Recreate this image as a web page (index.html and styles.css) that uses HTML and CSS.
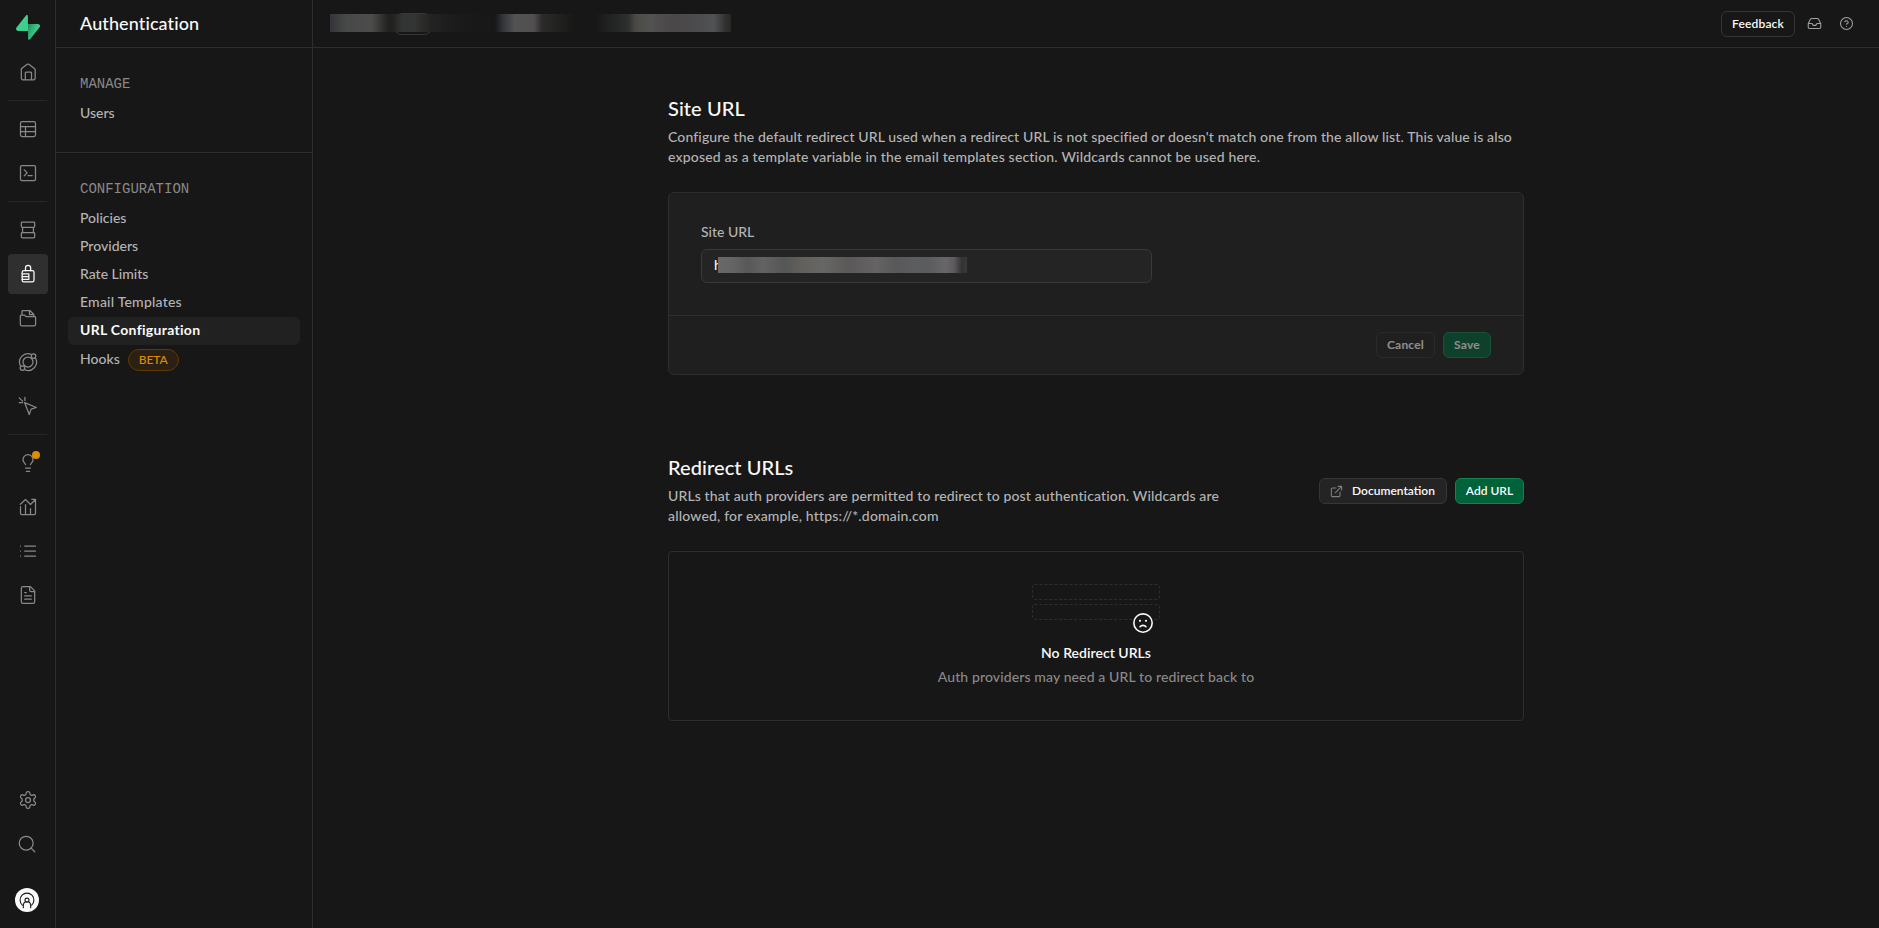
FILE: index.html
```
<!DOCTYPE html>
<html lang="en">
<head>
<meta charset="utf-8">
<title>Authentication</title>
<link rel="stylesheet" href="styles.css">
</head>
<body>
<div class="app">
  <nav class="rail">
    <a class="logo"><svg viewBox="0 0 109 113"><defs><linearGradient id="bolt" x1="54" y1="55" x2="94" y2="72" gradientUnits="userSpaceOnUse"><stop stop-color="#249361"/><stop offset="1" stop-color="#3ecf8e"/></linearGradient></defs><path fill="url(#bolt)" d="M63.7 110.3C60.8 113.9 55 111.9 55 107.3L54 40.1H99.2C107.4 40.1 112 49.5 106.9 55.9Z"/><path fill="#3ecf8e" d="M45.3 2.1C48.2-1.5 54 .4 54 5L54.5 72.3H9.8C1.6 72.3-2.9 62.8 2.2 56.4Z"/></svg></a>
    <a class="rail-item"><svg viewBox="0 0 24 24"><path d="M4 8l7-5.2a1.8 1.8 0 0 1 2 0L20 8a1.5 1.5 0 0 1 .6 1.2v10.3a1.8 1.8 0 0 1-1.8 1.8H5.8A1.8 1.8 0 0 1 4 19.500Z M8.800 21.200v-8a1.200 1.200 0 0 1 1.200-1.200h5a1.200 1.200 0 0 1 1.200 1.200v8"/></svg></a>
    <hr class="rail-line">
    <a class="rail-item"><svg viewBox="0 0 24 24"><rect x="3" y="3" width="18" height="18" rx="2"/><path d="M3 9h18M3 15h18M9 9v12"/></svg></a>
    <a class="rail-item"><svg viewBox="0 0 24 24"><rect x="3" y="3" width="18" height="18" rx="1.500"/><path d="M7.500 8.300L11 11.800l-3.500 3.500M12 15h5"/></svg></a>
    <hr class="rail-line">
    <a class="rail-item"><svg viewBox="0 0 24 24"><rect x="4" y="2.600" width="16" height="6.200" rx="1"/><path d="M5.500 8.800v6.400M18.500 8.800v6.400"/><rect x="4" y="15.200" width="16" height="6.200" rx="1"/></svg></a>
    <a class="rail-item active"><svg viewBox="0 0 24 24"><path d="M9 8V4.800a3.100 3.100 0 0 1 6.200 0V8M5 11.800h8v6.700H5M5 15.200h8"/><rect x="5" y="8" width="14.200" height="13.500" rx="2"/></svg></a>
    <a class="rail-item"><svg viewBox="0 0 24 24"><path d="M4.800 8.500V4a1 1 0 0 1 1-1h8.400L19 7.800v2.600M13.800 3v4.800H19M2.800 9.500a1 1 0 0 1 1-1h3.700l2.600 1.900h10a1 1 0 0 1 1 1v8.100a2 2 0 0 1-2 2H4.800a2 2 0 0 1-2-2Z"/></svg></a>
    <a class="rail-item"><svg viewBox="0 0 24 24"><path d="M16 2.900A10 10 0 0 0 3.200 17M20.900 7.200A10 10 0 0 1 8 21.200"/><circle cx="12" cy="12" r="6"/><circle cx="18.600" cy="4.900" r="2.700"/><circle cx="5.300" cy="19.200" r="2.700"/></svg></a>
    <a class="rail-item"><svg viewBox="0 0 24 24"><path d="M8 8l14 5.800-6.300 2-2.200 6.400ZM1.500 2.200l4 4M8.300 1.500v4M1.500 8h4"/></svg></a>
    <hr class="rail-line">
    <a class="rail-item"><svg viewBox="0 0 24 24"><path d="M15 14c.2-1 .7-1.700 1.500-2.500 1-.9 1.500-2.200 1.500-3.500A6 6 0 0 0 6 8c0 1 .2 2.200 1.500 3.500.7.700 1.300 1.500 1.500 2.500M9 18h6M10 22h4"/></svg><i class="dot"></i></a>
    <a class="rail-item"><svg viewBox="0 0 24 24"><path d="M3 11.500v8a1.500 1.500 0 0 0 1.500 1.500h15a1.500 1.500 0 0 0 1.500-1.500V8M2.800 8.700L9 3l6 6 6-6M16.500 2.800H21v4M9 9v12M15 14v7"/></svg></a>
    <a class="rail-item"><svg viewBox="0 0 24 24"><path d="M8 6h13M8 12h13M8 18h13M3 6h.01M3 12h.01M3 18h.01"/></svg></a>
    <a class="rail-item"><svg viewBox="0 0 24 24"><path d="M15 2H6a2 2 0 0 0-2 2v16a2 2 0 0 0 2 2h12a2 2 0 0 0 2-2V7Z M14 2v4a2 2 0 0 0 2 2h4M10 9H8M16 13H8M16 17H8"/></svg></a>
    <div class="rail-bottom">
      <a class="rail-item"><svg viewBox="0 0 24 24"><path d="M12.220 2h-.44a2 2 0 0 0-2 2v.18a2 2 0 0 1-1 1.730l-.43.250a2 2 0 0 1-2 0l-.15-.080a2 2 0 0 0-2.730.730l-.22.380a2 2 0 0 0 .730 2.730l.150.100a2 2 0 0 1 1 1.720v.510a2 2 0 0 1-1 1.740l-.15.090a2 2 0 0 0-.73 2.730l.220.380a2 2 0 0 0 2.730.730l.150-.080a2 2 0 0 1 2 0l.430.250a2 2 0 0 1 1 1.730V20a2 2 0 0 0 2 2h.440a2 2 0 0 0 2-2v-.180a2 2 0 0 1 1-1.730l.430-.250a2 2 0 0 1 2 0l.150.080a2 2 0 0 0 2.730-.730l.220-.390a2 2 0 0 0-.730-2.730l-.150-.080a2 2 0 0 1-1-1.740v-.500a2 2 0 0 1 1-1.740l.150-.090a2 2 0 0 0 .730-2.730l-.220-.380a2 2 0 0 0-2.730-.730l-.150.080a2 2 0 0 1-2 0l-.430-.250a2 2 0 0 1-1-1.730V4a2 2 0 0 0-2-2z"/><circle cx="12" cy="12" r="3"/></svg></a>
      <a class="rail-item search"><svg viewBox="0 0 24 24"><circle cx="11" cy="11" r="8.300"/><path d="M21.300 21.300l-4.400-4.400"/></svg></a>
      <a class="avatar"><svg viewBox="0 0 24 24"><path d="M7.300 17.100a6.900 6.900 0 1 1 9.400 0"/><circle cx="12" cy="12.100" r="2"/><path d="M8.300 19.800v-2.300c0-1.800 1.200-3.300 2.600-3.900M15.700 19.800v-2.300c0-1.800-1.200-3.300-2.600-3.900"/></svg></a>
    </div>
  </nav>

  <aside class="side">
    <h1 class="side-title">Authentication</h1>
    <section class="side-group manage">
      <h2>MANAGE</h2>
      <a>Users</a>
    </section>
    <section class="side-group">
      <h2>CONFIGURATION</h2>
      <a>Policies</a>
      <a>Providers</a>
      <a>Rate Limits</a>
      <a class="wide">Email Templates</a>
      <a class="current">URL Configuration</a>
      <a class="hooks">Hooks <span class="beta">BETA</span></a>
    </section>
  </aside>

  <div class="main">
    <header class="top">
      <div class="crumbs"><i class="crumb-pill"></i><i class="crumb-blur"></i></div>
      <div class="top-actions">
        <button class="btn outline">Feedback</button>
        <svg class="ico" viewBox="0 0 24 24"><path d="M22 12h-6l-2 3h-4l-2-3H2M5.450 5.110L2 12v6a2 2 0 0 0 2 2h16a2 2 0 0 0 2-2v-6l-3.450-6.890A2 2 0 0 0 16.760 4H7.240a2 2 0 0 0-1.790 1.110z"/></svg>
        <svg class="ico" viewBox="0 0 24 24"><circle cx="12" cy="12" r="9.600"/><path d="M9.300 9.300a2.800 2.800 0 0 1 5.400 1c0 1.800-2.700 2.700-2.700 2.700M12 16.700h.01"/></svg>
      </div>
    </header>

    <main class="content">
      <section>
        <h3>Site URL</h3>
        <p class="desc">Configure the default redirect URL used when a redirect URL is not specified or doesn't match one from the allow list. This value is also<br><span class="loose">exposed as a template variable in the email templates section. Wildcards cannot be used here.</span></p>
        <div class="card">
          <div class="card-body">
            <label>Site URL</label>
            <div class="input"><span>h</span><i class="value-blur"></i></div>
          </div>
          <div class="card-foot">
            <button class="btn outline off">Cancel</button>
            <button class="btn primary off">Save</button>
          </div>
        </div>
      </section>

      <section class="redirects">
        <div class="redirect-head">
          <div>
            <h3>Redirect URLs</h3>
            <p class="desc">URLs that auth providers are permitted to redirect to post authentication. Wildcards are<br><span class="loose">allowed, for example, https://*.domain.com</span></p>
          </div>
          <div class="head-actions">
            <button class="btn doc"><svg viewBox="0 0 24 24"><path d="M15 2.500h6.500V9M10 14L21.500 2.500M18.500 13v6.500a2 2 0 0 1-2 2h-12a2 2 0 0 1-2-2v-12a2 2 0 0 1 2-2H11"/></svg>Documentation</button>
            <button class="btn primary">Add URL</button>
          </div>
        </div>
        <div class="empty">
          <div class="rows">
            <svg width="128" height="36" viewBox="0 0 128 36"><g fill="none" stroke="#2e2e2e" stroke-linecap="butt" stroke-dasharray="3 2"><rect x=".5" y=".5" width="127" height="15" rx="2"/><rect x=".5" y="20.500" width="127" height="15" rx="2"/></g></svg>
            <svg class="frown" viewBox="0 0 24 24"><circle cx="12" cy="12" r="11" fill="#171717"/><path d="M8.500 16.500s1.200-1.700 3.500-1.700 3.500 1.700 3.500 1.700"/><path stroke-width="2.600" d="M8.400 9.400h.01M15.600 9.400h.01"/></svg>
          </div>
          <strong>No Redirect URLs</strong>
          <span>Auth providers may need a URL to redirect back to</span>
        </div>
      </section>
    </main>
  </div>
</div>
</body>
</html>
```
FILE: styles.css
```
* { box-sizing: border-box; margin: 0; padding: 0; }
body { background: #171717; color: #b4b4b4; font: 500 14px/20px Lato, "Liberation Sans", sans-serif; overflow: hidden; }
svg { display: block; fill: none; stroke: currentColor; stroke-linecap: round; stroke-linejoin: round; }
i { display: block; }
button { font: inherit; }

.app { display: flex; height: 928px; }

.rail { width: 56px; border-right: 1px solid #2e2e2e; display: flex; flex-direction: column; gap: 4px; padding: 15px 7px 16px 8px; color: #898989; }
.logo { padding-left: 8px; height: 33px; }
.logo svg { width: 24px; height: 25px; stroke: none; }
.rail-item { width: 40px; height: 40px; flex: none; display: flex; align-items: center; justify-content: center; position: relative; border-radius: 4px; }
.rail-item svg { width: 20px; height: 20px; stroke-width: 1.5; }
.rail-item.active { background: #2f2f2f; color: #fafafa; }
.rail-line { border: 0; height: 1px; width: 39px; flex: none; background: #262626; margin: 4px 0; }
.dot { position: absolute; right: 8px; top: 8px; width: 8px; height: 8px; border-radius: 50%; background: #db8e00; }
.rail-bottom { margin-top: auto; display: flex; flex-direction: column; gap: 4px; }
.search svg { margin-right: 2px; }
.avatar { width: 24px; height: 24px; margin: 20px 0 0 7px; border-radius: 50%; background: #fafafa; color: #171717; overflow: hidden; }
.avatar svg { width: 24px; height: 24px; stroke-width: 1.1; }

.side { width: 257px; border-right: 1px solid #2e2e2e; }
.side-title { height: 48px; padding-left: 24px; border-bottom: 1px solid #2e2e2e; font-size: 18px; font-weight: 500; line-height: 47px; letter-spacing: 0.1px; color: #fafafa; }
.side-group { padding: 26px 12px 0; display: flex; flex-direction: column; }
.side-group.manage { height: 105px; border-bottom: 1px solid #2e2e2e; }
.side-group h2 { font: 400 14px/20px "Liberation Mono", monospace; color: #898989; padding-left: 12px; margin-bottom: 6px; }
.side-group a { height: 28px; line-height: 26px; padding-left: 12px; border-radius: 6px; }
.side-group a.wide { letter-spacing: 0.22px; }
.side-group .current { background: #212121; color: #fafafa; font-weight: 700; letter-spacing: 0.3px; }
.side-group .hooks { display: flex; align-items: center; gap: 8px; height: 28px; }
.beta { height: 22px; line-height: 20px; width: 51px; text-align: center; border: 1px solid #5f3a00; border-radius: 11px; background: #2b2013; color: #db8e00; font-size: 12px; margin-top: 1px; }

.main { flex: 1; display: flex; flex-direction: column; }
.top { height: 48px; border-bottom: 1px solid #2e2e2e; display: flex; justify-content: space-between; align-items: center; padding: 0 25px 0 17px; }
.crumbs { position: relative; width: 401px; height: 18px; margin-top: -1px; }
.crumb-pill { position: absolute; left: 63px; top: -1px; width: 40px; height: 22px; border: 1px solid #363636; border-radius: 9px; }
.crumb-blur { position: absolute; inset: 0; background: linear-gradient(90deg, #35333a 0, #474948 16px, #4b4c4b 42px, #383735 50px, #212120 58px, #212120 62px, #323433 72px, #333433 84px, #232322 101px, #1d1d1d 118px, #191919 135px, #171717 165px, #35383c 174px, #525252 185px, #514f4f 204px, #2b2b29 212px, #1f1f1e 232px, #171717 245px, #171717 265px, #242625 285px, #2e302f 298px, #4c4a46 306px, #515251 320px, #4b4848 340px, #4a494b 360px, #505254 384px, #30302e 396px, #272725 401px); }
.top-actions { display: flex; align-items: center; gap: 17px; }
.top-actions .ico { width: 15px; height: 15px; stroke-width: 1.7; color: #a0a0a0; }
.top-actions .btn { margin-right: -5px; }

.btn { height: 26px; padding: 0 10px; border: 1px solid #363636; border-radius: 6px; background: #242424; color: #fafafa; font-size: 12px; font-weight: 600; line-height: 16px; letter-spacing: 0; display: flex; align-items: center; justify-content: center; white-space: nowrap; }
.btn.outline { background: transparent; width: 74px; letter-spacing: 0.15px; }
.btn.primary { background: #006239; border-color: #148253; width: 69px; padding: 0; }
.btn.off { opacity: .5; font-weight: 700; letter-spacing: 0.2px; }
.btn.outline.off { width: 59px; }
.btn.primary.off { width: 48px; }
.btn.doc { width: 128px; gap: 9px; }
.btn.doc svg { width: 13px; height: 13px; stroke-width: 2; color: #7e7e7e; margin-left: -1px; }

.content { width: 856px; margin: 46px 0 0 355px; }
h3 { font-size: 20px; font-weight: 500; line-height: 28px; letter-spacing: 0.08px; color: #fafafa; }
.desc { margin-top: 5px; letter-spacing: 0.138px; white-space: nowrap; }
.loose { letter-spacing: 0.18px; }
.card { margin-top: 25px; border: 1px solid #2e2e2e; border-radius: 6px; background: #1f1f1f; }
.card-body { padding: 29px 32px 32px; height: 122px; }
.card-body label { display: block; }
.input { margin-top: 7px; width: 451px; height: 34px; border: 1px solid #393939; border-radius: 6px; background: #242424; color: #fafafa; padding: 0 12px 2px; display: flex; align-items: center; }
.input span { width: 8px; }
.value-blur { position: relative; margin-left: -4px; width: 249px; height: 16px; background: linear-gradient(90deg, #696969 0, #646464 15px, #58585a 30px, #636364 45px, #555656 66px, #62605b 84px, #666765 105px, #5b5858 130px, #656364 158px, #58585a 178px, #5c5d60 195px, #5b5c5d 210px, #686669 228px, #5c5a5c 236px, #333231 244px, #3a3938 249px); }
.card-foot { height: 59px; border-top: 1px solid #2e2e2e; display: flex; justify-content: flex-end; align-items: center; gap: 8px; padding: 0 32px; }

.redirects { margin-top: 78px; }
.redirect-head { display: flex; justify-content: space-between; align-items: center; }
.head-actions { display: flex; gap: 8px; margin-top: 3px; }
.empty { margin-top: 25px; height: 170px; border: 1px solid #2e2e2e; border-radius: 4px; display: flex; flex-direction: column; align-items: center; padding-top: 32px; }
.rows { position: relative; }
.frown { position: absolute; right: 7px; top: 29px; width: 20px; height: 20px; stroke-width: 1.9; color: #fafafa; }
.empty strong { margin-top: 21px; font-weight: 600; letter-spacing: 0.03px; line-height: 24px; color: #fafafa; }
.empty span { color: #898989; letter-spacing: 0.12px; line-height: 24px; }
```
